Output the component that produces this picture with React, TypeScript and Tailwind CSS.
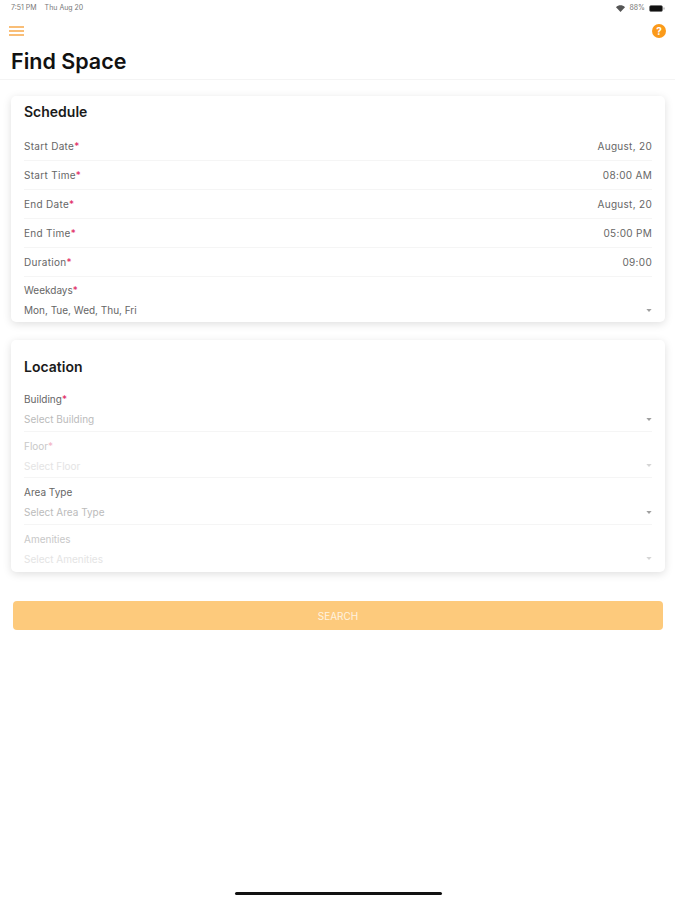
import React from "react";

function Req() {
  return <span className="text-[#e0245e]">*</span>;
}

function Row({ label, value }: { label: string; value: string }) {
  return (
    <div className="h-[29px] flex items-center justify-between mx-[13px] border-b border-[#f5f5f5] text-[10px] tracking-[0.3px] text-[#666]">
      <span>{label}<Req /></span>
      <span>{value}</span>
    </div>
  );
}

function Caret({ light }: { light?: boolean }) {
  return (
    <svg width="6" height="3" viewBox="0 0 7 4" className={light ? "opacity-30" : "opacity-70"}>
      <path d="M0 0h7L3.500 4z" fill="#777" />
    </svg>
  );
}

function Select({
  label,
  value,
  req,
  disabled,
  placeholder,
  last,
}: {
  label: string;
  value: string;
  req?: boolean;
  disabled?: boolean;
  placeholder?: boolean;
  last?: boolean;
}) {
  return (
    <div className={`mx-[13px] h-[46.500px] pt-[7px] text-[10px] leading-[14px] ${last ? "" : "border-b border-[#f5f5f5]"}`}>
      <div className={disabled ? "text-[#c8c8c8]" : "text-[#666]"}>
        {label}
        {req && <span className={disabled ? "text-[#f2b5c6]" : "text-[#e0245e]"}>*</span>}
      </div>
      <div className="mt-[6px] flex items-center justify-between">
        <span className={disabled ? "text-[#e4e4e4]" : placeholder ? "text-[#bbb]" : "text-[#666]"}>{value}</span>
        <Caret light={disabled} />
      </div>
    </div>
  );
}

export default function App() {
  return (
    <div className="w-[675px] h-[900px] bg-white flex flex-col font-['Inter',sans-serif] overflow-hidden">
      <div className="h-[16px] pl-[11px] pr-[10px] flex items-center justify-between text-[7px] text-[#777]">
        <div className="flex gap-[8px]">
          <span>7:51 PM</span>
          <span>Thu Aug 20</span>
        </div>
        <div className="flex items-center gap-[4px]">
          <svg width="9" height="7" viewBox="0 0 9 7">
            <path d="M0 2.200C2.500-.4 6.500-.4 9 2.200L4.500 7z" fill="#555" />
          </svg>
          <span>88%</span>
          <svg width="16" height="7" viewBox="0 0 16 7">
            <rect x="0.500" y="0.500" width="13" height="6" rx="1.500" fill="#111" stroke="#666" strokeWidth="0.500" />
            <rect x="14.500" y="2.500" width="1" height="2" fill="#999" />
          </svg>
        </div>
      </div>

      <div className="h-[16px] mt-[7px] pl-[9px] pr-[9px] flex items-center justify-between">
        <svg width="16" height="10" viewBox="0 0 16 10">
          <path d="M0 1h15M0 5h15M0 9h15" stroke="#f7a94b" strokeWidth="1.300" />
        </svg>
        <div className="w-[14px] h-[14px] rounded-full bg-[#fb9a1a] text-white text-[10px] font-bold flex items-center justify-center">
          ?
        </div>
      </div>

      <div className="h-[41px] pl-[11px] pt-[7px] border-b border-[#f4f4f4] text-[21.500px] leading-[30px] font-semibold text-[#111]">
        Find Space
      </div>

      <div className="pl-[11px] pr-[10px] pt-[16px] flex flex-col">
        <div className="h-[226px] rounded-[5px] bg-white shadow-[0_2px_8px_rgba(0,0,0,0.13)] flex flex-col">
          <div className="h-[36px] pl-[13px] pt-[6px] text-[14px] leading-[20px] font-semibold text-[#1a1a1a]">
            Schedule
          </div>
          <Row label="Start Date" value="August, 20" />
          <Row label="Start Time" value="08:00 AM" />
          <Row label="End Date" value="August, 20" />
          <Row label="End Time" value="05:00 PM" />
          <Row label="Duration" value="09:00" />
          <div className="mx-[13px] pt-[6px] text-[10px] leading-[14px] text-[#666]">
            <div>Weekdays<Req /></div>
            <div className="mt-[6px] flex items-center justify-between">
              <span>Mon, Tue, Wed, Thu, Fri</span>
              <Caret />
            </div>
          </div>
        </div>

        <div className="mt-[18px] h-[232px] rounded-[5px] bg-white shadow-[0_2px_8px_rgba(0,0,0,0.13)] flex flex-col">
          <div className="h-[45px] pl-[13px] pt-[17px] text-[14px] leading-[20px] font-semibold text-[#1a1a1a]">
            Location
          </div>
          <Select label="Building" value="Select Building" req placeholder />
          <Select label="Floor" value="Select Floor" req disabled />
          <Select label="Area Type" value="Select Area Type" placeholder />
          <Select label="Amenities" value="Select Amenities" disabled last />
        </div>

        <button className="mt-[29px] mx-[2px] h-[29px] pt-[1px] rounded-[4px] bg-[#fdca7c] text-[#fff3e0] text-[10px]">
          SEARCH
        </button>
      </div>

      <div className="mt-auto mb-[5px] ml-[235px] w-[207px] h-[3px] rounded-full bg-[#111]" />
    </div>
  );
}
